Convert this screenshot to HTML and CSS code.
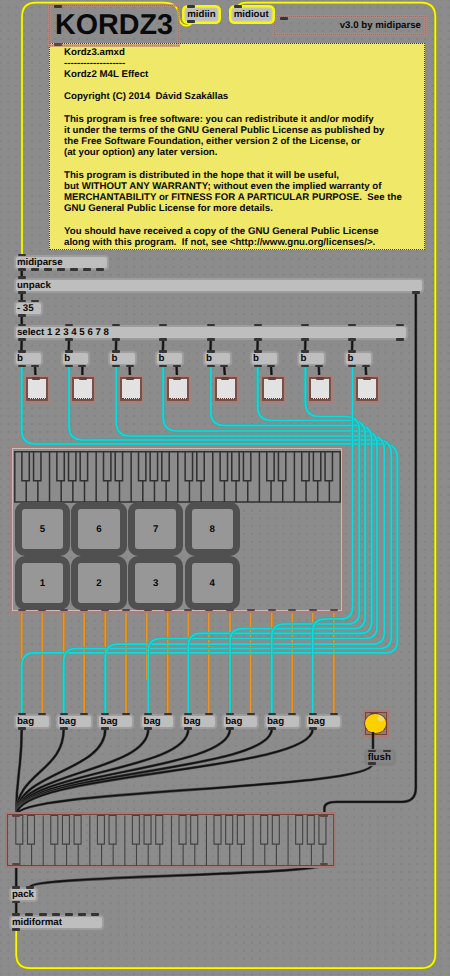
FILE: index.html
```html
<!DOCTYPE html>
<html lang="en">
<head>
<meta charset="utf-8">
<title>Kordz3</title>
<link rel="stylesheet" href="styles.css">
</head>
<body>
<main class="patcher" id="patcher">
<div class="bang"><span class="bang-light"></span></div>
<svg class="wires" id="wires" width="450" height="976" viewBox="0 0 450 976"></svg>
<pre class="license">Kordz3.amxd
-------------------
Kordz2 M4L Effect

Copyright (C) 2014  Dávid Szakállas

This program is free software: you can redistribute it and/or modify
it under the terms of the GNU General Public License as published by
the Free Software Foundation, either version 2 of the License, or
(at your option) any later version.

This program is distributed in the hope that it will be useful,
but WITHOUT ANY WARRANTY; without even the implied warranty of
MERCHANTABILITY or FITNESS FOR A PARTICULAR PURPOSE.  See the
GNU General Public License for more details.

You should have received a copy of the GNU General Public License
along with this program.  If not, see &lt;http://www.gnu.org/licenses/&gt;.</pre>
<h1 class="comment title">KORDZ3</h1>
<p class="comment version">v3.0 by midiparse</p>
<section class="bpatcher">
<svg class="keys keys-dark" id="keysTop" width="327" height="52" viewBox="14.4 451 327 52"></svg>
<div class="pads">
<div class="pad">5</div><div class="pad">6</div><div class="pad">7</div><div class="pad">8</div>
<div class="pad">1</div><div class="pad">2</div><div class="pad">3</div><div class="pad">4</div>
</div>
</section>
<div class="kslider"><svg class="keys" id="keysBottom" width="326" height="51" viewBox="7.5 814.5 326 51"></svg></div>
</main>
<script src="patch.js"></script>
</body>
</html>
```
FILE: styles.css
```css
body {
  margin: 0;
  font-family: "Liberation Sans", Arial, sans-serif;
  font-weight: bold;
  font-size: 9.7px;
  color: #0a0a0a;
  text-rendering: geometricPrecision;
}
.patcher {
  position: relative;
  width: 450px;
  height: 976px;
  overflow: hidden;
  background-color: #8c8c8c;
  background-image: radial-gradient(circle at 1px 1px, #7a7a7a 0.4px, transparent 1px);
  background-size: 7.86px 7.86px;
  background-position: -0.5px 6.5px;
}
.wires { position: absolute; left: 0; top: 0; }
.wires path { fill: none; }
.edge { stroke-width: 2.8; }
.core { stroke-width: 1.7; }
.yellow.edge { stroke: #a2a21c; }
.yellow.core { stroke: #fafa00; }
.cyan.edge { stroke: #3aa8a6; }
.cyan.core { stroke: #08dede; }
.orange.edge { stroke: #a97b3e; }
.orange.core { stroke: #f0941c; }
.black.edge { stroke: #484848; }
.black.core { stroke: #121212; }

.license {
  position: absolute;
  left: 49px;
  top: 43px;
  box-sizing: border-box;
  width: 376px;
  height: 207px;
  margin: 0;
  padding: 2.5px 0 0 14px;
  border: 1px dotted #3c3c34;
  background: #f0e868;
  font: bold 9.7px/11.2px "Liberation Sans", Arial, sans-serif;
}
.comment {
  position: absolute;
  box-sizing: border-box;
  margin: 0;
  border: 3px solid rgba(192, 132, 124, 0.68);
  outline: 1px dotted rgba(120, 72, 68, 0.4);
  outline-offset: -2px;
}
.title {
  left: 48px;
  top: 4px;
  width: 132px;
  height: 43px;
  padding-left: 4px;
  font-size: 28.7px;
  line-height: 36.5px;
}
.version {
  left: 273px;
  top: 15px;
  width: 154px;
  height: 21px;
  padding-right: 3px;
  line-height: 16px;
  text-align: right;
}

.node {
  position: absolute;
  box-sizing: border-box;
  height: 11px;
  padding-left: 1.2px;
  border-radius: 2px;
  background: #bebebe;
  box-shadow: 0 0 1px 2px rgba(166, 166, 166, 0.75);
  line-height: 11px;
  white-space: pre;
}
.node-selected { box-shadow: 0 0 0 1.5px #c6c6a8, 0 0 0 4px #f8f80c; }
.node-muted {
  background: #868686;
  box-shadow: 0 0 1px 3px #828282;
}
.port {
  position: absolute;
  width: 8px;
  height: 2.6px;
  border-radius: 1px;
  background: #343434;
}
.port-brown { background: #604340; }

.toggle {
  position: absolute;
  box-sizing: border-box;
  width: 22px;
  height: 24.6px;
  border: 2px solid #74504b;
  background: #e2e2e2;
  box-shadow: 0 0 0 2px #a97f7a;
}
.toggle::after {
  content: "";
  position: absolute;
  left: 0;
  right: 0;
  bottom: 0;
  border-bottom: 1px dotted #5c3935;
}

.bpatcher {
  position: absolute;
  left: 12px;
  top: 448px;
  box-sizing: border-box;
  width: 330px;
  height: 163px;
  padding: 2px 0 0 1.4px;
  border: 1px solid #c8bcba;
  box-shadow: 0 0 0 2px #a87f7a;
}
.keys { display: block; }
.keys path { fill: #8c8c8c; stroke: #424242; stroke-width: 1.1; }
.keys-dark path { stroke: #303030; stroke-width: 1.5; }
.pads {
  display: grid;
  grid-template-columns: repeat(4, 55.4px);
  grid-auto-rows: 54px;
  column-gap: 1.2px;
  padding-left: 0.4px;
  margin-top: -0.8px;
}
.pad {
  box-sizing: border-box;
  border: 7px solid #505050;
  border-radius: 10px;
  background: #979797;
  line-height: 41px;
  text-align: center;
}

.kslider {
  position: absolute;
  left: 7px;
  top: 814px;
  box-sizing: border-box;
  width: 326.5px;
  height: 52px;
  border: 1px solid #74443f;
  box-shadow: 0 0 0 2px #a67974;
}
.kslider .keys { margin: -0.5px; height: 51px; }

.bang {
  position: absolute;
  left: 364.5px;
  top: 712px;
  box-sizing: border-box;
  width: 22px;
  height: 22.5px;
  border: 1px solid #74443f;
  background: #8f7a77;
  box-shadow: 0 0 0 2px #a97974;
}
.bang-light {
  display: block;
  width: 21px;
  height: 19.5px;
  margin: 0.5px -0.5px;
  border-radius: 50%;
  background: radial-gradient(circle at 16px 4px, #eedf62 0 3.2px, #ffd000 3.8px);
  box-shadow: 0 0 0 0.7px #594116;
}
```
FILE: patch.js
```js
const patcher = document.getElementById("patcher");
const wires = document.getElementById("wires");
const NS = "http://www.w3.org/2000/svg";

function addPath(parent, d, cls) {
  const p = document.createElementNS(NS, "path");
  p.setAttribute("d", d);
  if (cls) p.setAttribute("class", cls);
  parent.appendChild(p);
}
function wire(color, d) {
  addPath(wires, d, color + " edge");
  addPath(wires, d, color + " core");
}
function place(cls, x, y, w, text) {
  const el = document.createElement("div");
  el.className = cls;
  el.style.left = x + "px";
  el.style.top = y + "px";
  if (w) el.style.width = w + "px";
  if (text) el.textContent = text;
  patcher.appendChild(el);
}
function ports(xs, y, brown) {
  xs.forEach(x => place(brown ? "port port-brown" : "port", x - 4, y - 1.3));
}
// Vertical-tangent cable between an outlet and an inlet.
function sCurve(x1, y1, x2, y2) {
  const m = (y1 + y2) / 2;
  return `M${x1} ${y1}C${x1} ${m} ${x2} ${m} ${x2} ${y2}`;
}

const bx = [21.7, 69, 116.2, 163.2, 210.8, 257.7, 305.4, 352.3];
const bagX = [21.7, 63.7, 105.3, 148.3, 188.3, 230, 271.7, 312.7];
const bagX2 = [42.3, 84.2, 126, 167.7, 208.7, 250.5, 292.3, 333.8];
const laneX = [397.3, 391.3, 384.3, 377, 371.6, 365.2, 359.3, 352.5];
const topY = [444, 440, 436, 431, 425.5, 420.5, 416.5];
const bottomY = [652.8, 648.5, 644.2, 638.5, 633.4, 628.7, 624, 619];
const toggleX = [25.5, 72.3, 120, 167, 215, 261.7, 309.3, 356.3];

// MIDI in / out
wire("yellow", "M191.5 23Q190 25.8 186 25.6Q179 25.2 178.7 15C178.5 7 174 2.7 163 2.7H36Q22 2.7 22 17V254");
wire("yellow", "M238 7Q239 2.7 247 2.7H421Q435.3 2.7 435.3 17V954Q435.3 968.2 421 968.2H30Q16.2 968.2 16.2 954V929");

// Note values
bagX.forEach((x, i) => {
  const o = i === 3 ? 146.7 : x;
  wire("orange", `M${o} 611V${i === 3 ? 680 : 713}`);
  wire("orange", `M${bagX2[i]} 611V713`);
});
for (let i = 0; i < 8; i++) {
  const x = bx[i], r = laneX[i], b = bottomY[i], g = bagX[i];
  const start = i < 7
    ? `M${x} 367V${topY[i] - 14}Q${x} ${topY[i]} ${x + 14} ${topY[i]}H${r - 14}Q${r} ${topY[i]} ${r} ${topY[i] + 14}`
    : `M${r} 367`;
  wire("cyan", `${start}V${b - 12}Q${r} ${b} ${r - 12} ${b}H${g + 13}Q${g} ${b} ${g} ${b + 13}V713`);
}

// Control flow
[[270, 277], [293, 301], [316, 325]].forEach(([a, b]) => wire("black", `M21.7 ${a}V${b}`));
bx.forEach((x, i) => {
  wire("black", `M${x} 340L${x - 0.3} 351`);
  wire("black", `M${x + 13.4} 367L${toggleX[i] + 10} 378`);
});
bagX.forEach(x => wire("black", sCurve(x, 729, 16.2, 815)));
wire("black", sCurve(372.5, 764, 16.2, 815));
wire("black", "M373 732V750");
wire("black", "M415.8 293V788Q415.8 801.8 402 801.8H337Q324.4 801.8 324.4 808V815");
wire("black", sCurve(324.4, 864, 30, 887));
wire("black", "M16.2 864V887");
wire("black", "M16.2 902V914");

// Object boxes
place("node node-selected", 186, 9, 31, "midiin");
place("node node-selected", 232.5, 9, 38, "midiout");
place("node", 15.7, 257, 91, "midiparse");
place("node", 15.7, 280, 406, "unpack");
place("node", 15.7, 303, 25, "- 35");
place("node", 15.7, 327, 390, "select 1 2 3 4 5 6 7 8");
bx.forEach(x => place("node", x - 6, 353, 25, "b"));
bagX.forEach((x, i) => place("node", x - 6, 716, i === 3 ? 31 : 33, "bag"));
place("node node-muted", 366.5, 752, 26, "flush");
place("node", 10.7, 889, 25, "pack");
place("node", 10.7, 916.5, 91, "midiformat");
toggleX.forEach(x => place("toggle", x, 376.6));

// Inlets and outlets
ports([191], 6.7);
ports([191], 21.5);
ports([238], 6.7);
ports([58], 6.5);
ports([58], 44.6, true);
ports([284], 18.3);
ports([21.7], 254.8);
ports([21.7, 34.8, 48, 61, 74, 87.2, 100.4], 269.7);
ports([21.7], 277.7);
ports([21.7, 415.5], 292.7);
ports([21.7, 35], 301);
ports([21.7], 315.5);
ports([...bx.slice(1), 400], 325);
ports([21.7], 325);
ports([...bx, 400], 339.5);
bx.forEach(x => {
  ports([x], 351.4);
  ports([x, x + 13.4], 366);
});
ports(toggleX.map(x => x + 10.3), 378.3, true);
const noteOut = [...bagX, ...bagX2];
ports(noteOut, 610, true);
ports(noteOut, 714);
ports(bagX, 728.7);
ports([374], 713.2, true);
ports([372.3, 387], 751);
ports([372.3], 763.6);
ports([16.2, 324.4], 815.6, true);
ports([16.2, 324.4], 864, true);
ports([16.2, 30], 887.3);
ports([16.2], 902);
ports([16.2, 29.3, 42.5, 55.8, 69, 82, 95.3], 914.7);
ports([16.2], 929.3);

// Keyboards: 28 white keys starting on C
function keyboard(svg, x0, shift, top, keyEnd, bottom, bw) {
  for (let i = 0; i < 27; i++) {
    const x = x0 + i * 11.66;
    addPath(svg, `M${x} ${top}V${bottom}`);
  }
  for (let i = 0; i < 27; i++) {
    if ([2, 6].includes(i % 7)) continue;
    const c = x0 + i * 11.66 + shift;
    addPath(svg, `M${c - bw / 2} ${top}H${c + bw / 2}V${keyEnd}H${c - bw / 2}Z`);
  }
}
const top1 = document.getElementById("keysTop");
addPath(top1, "M15.2 451.8H340.6V502H15.2Z");
keyboard(top1, 26.6, -0.6, 451.8, 480.8, 502, 7.4);
keyboard(document.getElementById("keysBottom"), 19.4, -0.6, 815, 843.6, 865, 7);
```
